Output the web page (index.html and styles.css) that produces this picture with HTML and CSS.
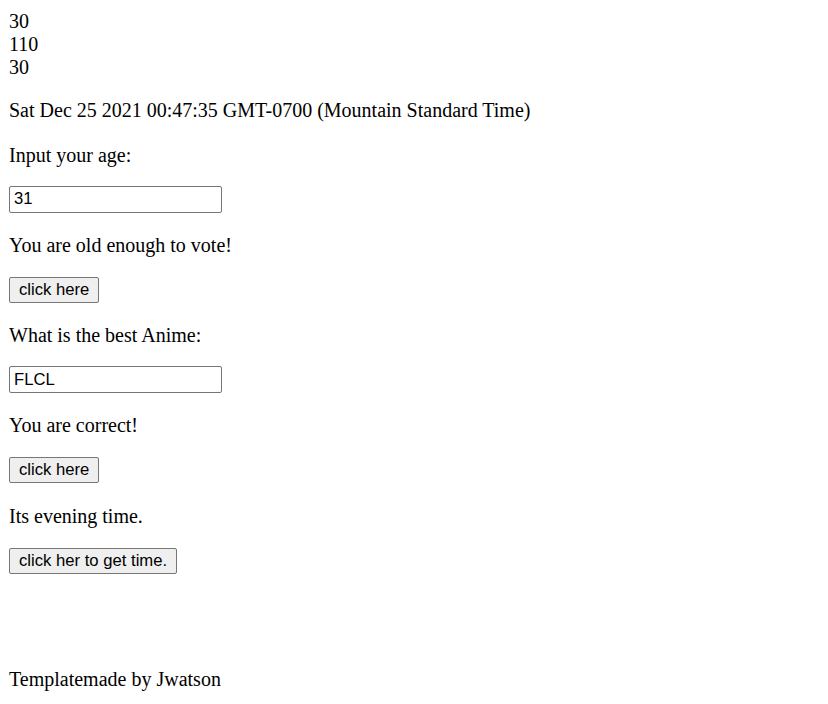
FILE: index.html
```html
<!DOCTYPE html>
<html>
<head>
<meta charset="utf-8">
<title>Template</title>
<link rel="stylesheet" href="styles.css">
</head>
<body>
<div class="nums">
  <div>30</div>
  <div>110</div>
  <div>30</div>
</div>
<p class="para date">Sat Dec 25 2021 00:47:35 GMT-0700 (Mountain Standard Time)</p>
<p class="para">Input your age:</p>
<div class="row"><input class="field" type="text" value="31"></div>
<p class="para">You are old enough to vote!</p>
<div class="row"><button class="btn" type="button">click here</button></div>
<p class="para">What is the best Anime:</p>
<div class="row"><input class="field" type="text" value="FLCL"></div>
<p class="para">You are correct!</p>
<div class="row"><button class="btn" type="button">click here</button></div>
<p class="para">Its evening time.</p>
<div class="row"><button class="btn" type="button">click her to get time.</button></div>
<footer class="credit">Templatemade by Jwatson</footer>
</body>
</html>
```
FILE: styles.css
```css
html, body {
  background: #ffffff;
}
body {
  margin: 10px 9px;
  font-family: "Liberation Serif", "Times New Roman", serif;
  font-size: 20px;
  line-height: 23px;
  color: #000000;
}
.nums div {
  height: 23px;
}
.para {
  margin: 20px 0;
  height: 23px;
}
.date {
  margin-bottom: 21.5px;
}
.row {
  height: 27.3px;
  display: flex;
  align-items: flex-start;
}
.field {
  box-sizing: border-box;
  width: 213px;
  height: 27px;
  margin: -1px 0 0 0;
  padding: 0 4px;
  border: 1px solid #767676;
  border-radius: 2px;
  font-family: "Liberation Sans", Arial, sans-serif;
  font-size: 16.67px;
  color: #000000;
  background: #ffffff;
}
.btn {
  box-sizing: border-box;
  height: 26px;
  margin: 0;
  padding: 0 9px;
  border: 1px solid #767676;
  border-radius: 2px;
  background: #efefef;
  font-family: "Liberation Sans", Arial, sans-serif;
  font-size: 16.67px;
  color: #000000;
}
.credit {
  margin-top: 93px;
  height: 23px;
}
```
